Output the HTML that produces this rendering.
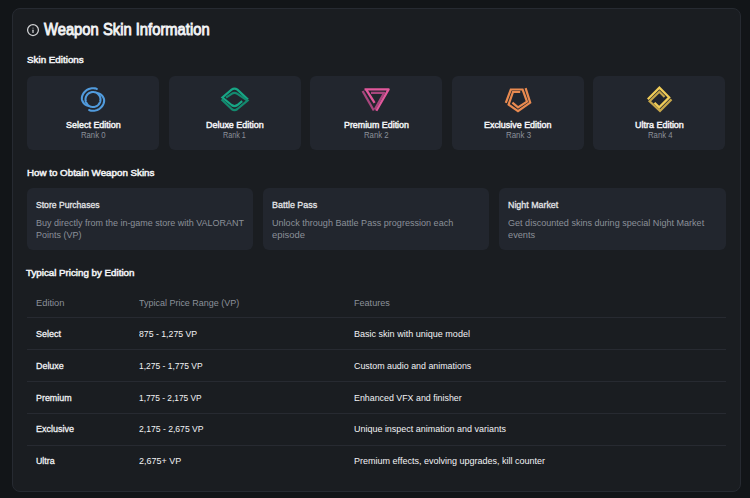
<!DOCTYPE html>
<html><head><meta charset="utf-8">
<style>
*{margin:0;padding:0;box-sizing:border-box}
html,body{width:750px;height:498px;overflow:hidden;background:#121518;font-family:"Liberation Sans",sans-serif;color:#f2f3f5}
.panel{position:absolute;left:12px;top:8px;width:729px;height:484px;background:#1a1d21;border:1px solid #262a31;border-radius:8px}
.ecard{position:absolute;top:75.5px;width:132.1px;height:74.5px;background:#22262e;border-radius:6px}
.ocard{position:absolute;top:188px;width:226.4px;height:62.2px;background:#22262e;border-radius:6px}
.row{position:absolute;left:27px;width:698.5px;height:1px;background:#272a31}
.t{position:absolute;white-space:nowrap;line-height:1;transform-origin:0 50%}
svg.ov{position:absolute;left:0;top:0;width:750px;height:498px}
</style></head><body>
<div class="panel"></div>
<div class="ecard" style="left:27px"></div><div class="ecard" style="left:168.55px"></div><div class="ecard" style="left:310.1px"></div><div class="ecard" style="left:451.65px"></div><div class="ecard" style="left:593.2px"></div>
<div class="ocard" style="left:27px"></div><div class="ocard" style="left:263px"></div><div class="ocard" style="left:499.2px"></div>
<div class="row" style="top:317px"></div><div class="row" style="top:349px"></div><div class="row" style="top:381px"></div><div class="row" style="top:413px"></div><div class="row" style="top:444.5px"></div>
<svg class="ov" viewBox="0 0 750 498" fill="none">
<g transform="translate(26.5 23.6) scale(0.5417)" stroke="#d2d3d5" stroke-width="2.3" stroke-linecap="round"><circle cx="12" cy="12" r="10"/><path d="M12 16.2V12.2"/><path d="M12 8.2h.01" stroke-opacity="0.75"/></g>
<g stroke="#519bdd" stroke-width="2.1" stroke-linecap="round">
<path d="M96.86 88.88 L95.88 88.57 L94.87 88.36 L93.85 88.23 L92.82 88.20 L91.79 88.26 L90.77 88.42 L89.77 88.67 L88.80 89.01 L87.86 89.44 L86.97 89.95 L86.12 90.54 L85.33 91.20 L84.61 91.93 L83.95 92.73 L83.37 93.58 L82.88 94.48 L82.46 95.43 L82.13 96.40 L81.92 97.41 L81.86 98.44 L81.95 99.46 L82.19 100.45 L82.56 101.38 L83.05 102.25 L83.64 103.03 L84.30 103.73 L85.02 104.32 L85.77 104.83 L86.53 105.24 L87.29 105.59 L88.03 105.87 L88.75 106.11 L89.45 106.31 L90.13 106.50 L90.80 106.68 L91.46 106.84 L92.14 106.95 L92.82 107.00 L93.51 106.98 L94.19 106.91 L94.85 106.77 L95.51 106.57 L96.14 106.31 L96.75 106.00 L97.33 105.63 L97.87 105.21 L98.37 104.74 L98.82 104.23 L99.23 103.68 L99.58 103.09 L99.88 102.48 L100.13 101.84 L100.31 101.18 L100.43 100.51 L100.49 99.83 L100.49 99.14 L100.43 98.46 L100.30 97.79 L100.12 97.13 L99.87 96.49 L99.57 95.88 L99.21 95.30 L98.80 94.75 L98.35 94.24 L97.84 93.77 L97.30 93.36"/>
<path d="M89.14 110.12 L90.12 110.43 L91.13 110.64 L92.15 110.77 L93.18 110.80 L94.21 110.74 L95.23 110.58 L96.23 110.33 L97.20 109.99 L98.14 109.56 L99.03 109.05 L99.88 108.46 L100.67 107.80 L101.39 107.07 L102.05 106.27 L102.63 105.42 L103.12 104.52 L103.54 103.57 L103.87 102.60 L104.08 101.59 L104.14 100.56 L104.05 99.54 L103.81 98.55 L103.44 97.62 L102.95 96.75 L102.36 95.97 L101.70 95.27 L100.98 94.68 L100.23 94.17 L99.47 93.76 L98.71 93.41 L97.97 93.13 L97.25 92.89 L96.55 92.69 L95.87 92.50 L95.20 92.32 L94.54 92.16 L93.86 92.05 L93.18 92.00 L92.49 92.02 L91.81 92.09 L91.15 92.23 L90.49 92.43 L89.86 92.69 L89.25 93.00 L88.67 93.37 L88.13 93.79 L87.63 94.26 L87.18 94.77 L86.77 95.32 L86.42 95.91 L86.12 96.52 L85.87 97.16 L85.69 97.82 L85.57 98.49 L85.51 99.17 L85.51 99.86 L85.57 100.54 L85.70 101.21 L85.88 101.87 L86.13 102.51 L86.43 103.12 L86.79 103.70 L87.20 104.25 L87.65 104.76 L88.16 105.23 L88.70 105.64"/>
</g>
<g stroke-width="2.2" stroke-linejoin="miter">
<path d="M248 99.6 L237.4 89.7 Q234.5 87.4 231.6 89.6 L222.4 97.5 L231.6 105 Q234.5 107.1 237.4 105 L242.2 101.2" stroke="#17a685"/>
<path d="M221.6 99.4 L231.6 109 Q234.5 111.2 237.4 109 L247.5 100.6 L237.4 93.8 Q234.5 91.9 231.6 93.8 L226 97.7" stroke="#138a6f"/>
</g>
<g stroke-width="2.3" stroke-linejoin="round">
<path d="M364.5 89.4 L388.6 89.4 L376.3 110.8" stroke="#e2589c"/>
<path d="M366.2 89.6 L374.6 102.9" stroke="#e2589c"/>
<path d="M362.6 91 L373.8 110.5" stroke="#a8467d"/>
<path d="M371 92.8 L384.2 92.8 L374.9 109.4" stroke="#a8467d"/>
</g>
<g stroke="#e98a50" stroke-width="2.2" stroke-linejoin="miter">
<path d="M505.8 102.8 L510.8 89.5 L522.6 89.5 L527 101.6 L518 107.4 L512.4 102.6"/>
<path d="M525.6 88.2 L530.2 102.6 L518 111.2 L508.6 104.6 L513 92 L520.2 92"/>
</g>
<g stroke-width="2.2" stroke-linejoin="miter">
<path d="M647.8 99.2 L659.4 87.6 L669.2 97.4 L659.2 107.4 L654.5 102.7" stroke="#f1cd58"/>
<path d="M671.5 99.4 L660 110.9 L649.6 101.3 L659.4 91.8 L664.6 97" stroke="#c6a64a"/>
</g>
</svg>
<div class="t" id="t0" style="left:44.33px;top:22.19px;font-size:15.6px;font-weight:normal;color:#f2f3f5;transform:scaleX(0.9477);-webkit-text-stroke:0.85px #f2f3f5">Weapon Skin Information</div>
<div class="t" id="t1" style="left:26.67px;top:54.87px;font-size:9.6px;font-weight:normal;color:#f2f3f5;transform:scaleX(1.0225);-webkit-text-stroke:0.5px #f2f3f5">Skin Editions</div>
<div class="t" id="t2" style="left:26.54px;top:167.87px;font-size:9.6px;font-weight:normal;color:#f2f3f5;transform:scaleX(1.0181);-webkit-text-stroke:0.5px #f2f3f5">How to Obtain Weapon Skins</div>
<div class="t" id="t3" style="left:26.35px;top:268.47px;font-size:9.6px;font-weight:normal;color:#f2f3f5;transform:scaleX(1.0167);-webkit-text-stroke:0.5px #f2f3f5">Typical Pricing by Edition</div>
<div class="t" id="t4" style="left:65.53px;top:119.82px;font-size:9.9px;font-weight:normal;color:#f2f3f5;transform:scaleX(0.9070);-webkit-text-stroke:0.5px #f2f3f5">Select Edition</div>
<div class="t" id="t5" style="left:205.72px;top:119.82px;font-size:9.9px;font-weight:normal;color:#f2f3f5;transform:scaleX(0.9052);-webkit-text-stroke:0.5px #f2f3f5">Deluxe Edition</div>
<div class="t" id="t6" style="left:343.94px;top:119.82px;font-size:9.9px;font-weight:normal;color:#f2f3f5;transform:scaleX(0.8957);-webkit-text-stroke:0.5px #f2f3f5">Premium Edition</div>
<div class="t" id="t7" style="left:484.32px;top:119.82px;font-size:9.9px;font-weight:normal;color:#f2f3f5;transform:scaleX(0.9031);-webkit-text-stroke:0.5px #f2f3f5">Exclusive Edition</div>
<div class="t" id="t8" style="left:635.34px;top:119.82px;font-size:9.9px;font-weight:normal;color:#f2f3f5;transform:scaleX(0.9081);-webkit-text-stroke:0.5px #f2f3f5">Ultra Edition</div>
<div class="t" id="t9" style="left:80.66px;top:130.84px;font-size:8.7px;font-weight:normal;color:#8b9099;transform:scaleX(0.8883)">Rank 0</div>
<div class="t" id="t10" style="left:223.39px;top:130.84px;font-size:8.7px;font-weight:normal;color:#8b9099;transform:scaleX(0.8292)">Rank 1</div>
<div class="t" id="t11" style="left:364.46px;top:130.84px;font-size:8.7px;font-weight:normal;color:#8b9099;transform:scaleX(0.8963)">Rank 2</div>
<div class="t" id="t12" style="left:505.58px;top:130.84px;font-size:8.7px;font-weight:normal;color:#8b9099;transform:scaleX(0.9097)">Rank 3</div>
<div class="t" id="t13" style="left:647.66px;top:130.84px;font-size:8.7px;font-weight:normal;color:#8b9099;transform:scaleX(0.8901)">Rank 4</div>
<div class="t" id="t14" style="left:35.85px;top:200.07px;font-size:9.6px;font-weight:normal;color:#e6e7ea;transform:scaleX(0.8956);-webkit-text-stroke:0.3px #e6e7ea">Store Purchases</div>
<div class="t" id="t15" style="left:271.55px;top:200.07px;font-size:9.6px;font-weight:normal;color:#e6e7ea;transform:scaleX(0.9315);-webkit-text-stroke:0.3px #e6e7ea">Battle Pass</div>
<div class="t" id="t16" style="left:508.05px;top:200.07px;font-size:9.6px;font-weight:normal;color:#e6e7ea;transform:scaleX(0.9237);-webkit-text-stroke:0.3px #e6e7ea">Night Market</div>
<div class="t" id="t17" style="left:35.75px;top:218.55px;font-size:8.8px;font-weight:normal;color:#8b9099;transform:scaleX(1.0214)">Buy directly from the in-game store with VALORANT</div>
<div class="t" id="t18" style="left:271.55px;top:218.55px;font-size:8.8px;font-weight:normal;color:#8b9099;transform:scaleX(1.0295)">Unlock through Battle Pass progression each</div>
<div class="t" id="t19" style="left:508.05px;top:218.55px;font-size:8.8px;font-weight:normal;color:#8b9099;transform:scaleX(1.0287)">Get discounted skins during special Night Market</div>
<div class="t" id="t20" style="left:35.75px;top:230.55px;font-size:8.8px;font-weight:normal;color:#8b9099;transform:scaleX(1.0200)">Points (VP)</div>
<div class="t" id="t21" style="left:271.55px;top:230.55px;font-size:8.8px;font-weight:normal;color:#8b9099;transform:scaleX(1.0738)">episode</div>
<div class="t" id="t22" style="left:508.05px;top:230.55px;font-size:8.8px;font-weight:normal;color:#8b9099;transform:scaleX(1.0481)">events</div>
<div class="t" id="t23" style="left:35.75px;top:298.09px;font-size:9.7px;font-weight:normal;color:#8b9099;transform:scaleX(0.9602)">Edition</div>
<div class="t" id="t24" style="left:139.25px;top:298.09px;font-size:9.7px;font-weight:normal;color:#8b9099;transform:scaleX(0.9262)">Typical Price Range (VP)</div>
<div class="t" id="t25" style="left:353.85px;top:298.09px;font-size:9.7px;font-weight:normal;color:#8b9099;transform:scaleX(0.9355)">Features</div>
<div class="t" id="t26" style="left:35.75px;top:329.19px;font-size:9.7px;font-weight:normal;color:#f2f3f5;transform:scaleX(0.9277);-webkit-text-stroke:0.3px #f2f3f5">Select</div>
<div class="t" id="t27" style="left:139.25px;top:329.02px;font-size:9.9px;font-weight:normal;color:#f2f3f5;transform:scaleX(0.8820)">875 - 1,275 VP</div>
<div class="t" id="t28" style="left:353.85px;top:329.02px;font-size:9.9px;font-weight:normal;color:#f2f3f5;transform:scaleX(0.9144)">Basic skin with unique model</div>
<div class="t" id="t29" style="left:35.75px;top:360.94px;font-size:9.7px;font-weight:normal;color:#f2f3f5;transform:scaleX(0.9195);-webkit-text-stroke:0.3px #f2f3f5">Deluxe</div>
<div class="t" id="t30" style="left:139.25px;top:360.77px;font-size:9.9px;font-weight:normal;color:#f2f3f5;transform:scaleX(0.8572)">1,275 - 1,775 VP</div>
<div class="t" id="t31" style="left:353.85px;top:360.77px;font-size:9.9px;font-weight:normal;color:#f2f3f5;transform:scaleX(0.8974)">Custom audio and animations</div>
<div class="t" id="t32" style="left:35.75px;top:392.69px;font-size:9.7px;font-weight:normal;color:#f2f3f5;transform:scaleX(0.9176);-webkit-text-stroke:0.3px #f2f3f5">Premium</div>
<div class="t" id="t33" style="left:139.25px;top:392.52px;font-size:9.9px;font-weight:normal;color:#f2f3f5;transform:scaleX(0.8449)">1,775 - 2,175 VP</div>
<div class="t" id="t34" style="left:353.85px;top:392.52px;font-size:9.9px;font-weight:normal;color:#f2f3f5;transform:scaleX(0.8960)">Enhanced VFX and finisher</div>
<div class="t" id="t35" style="left:35.75px;top:424.44px;font-size:9.7px;font-weight:normal;color:#f2f3f5;transform:scaleX(0.9283);-webkit-text-stroke:0.3px #f2f3f5">Exclusive</div>
<div class="t" id="t36" style="left:139.25px;top:424.27px;font-size:9.9px;font-weight:normal;color:#f2f3f5;transform:scaleX(0.8710)">2,175 - 2,675 VP</div>
<div class="t" id="t37" style="left:353.85px;top:424.27px;font-size:9.9px;font-weight:normal;color:#f2f3f5;transform:scaleX(0.9072)">Unique inspect animation and variants</div>
<div class="t" id="t38" style="left:35.75px;top:456.19px;font-size:9.7px;font-weight:normal;color:#f2f3f5;transform:scaleX(0.9097);-webkit-text-stroke:0.3px #f2f3f5">Ultra</div>
<div class="t" id="t39" style="left:139.25px;top:456.02px;font-size:9.9px;font-weight:normal;color:#f2f3f5;transform:scaleX(0.9079)">2,675+ VP</div>
<div class="t" id="t40" style="left:353.85px;top:456.02px;font-size:9.9px;font-weight:normal;color:#f2f3f5;transform:scaleX(0.9121)">Premium effects, evolving upgrades, kill counter</div>
</body></html>
